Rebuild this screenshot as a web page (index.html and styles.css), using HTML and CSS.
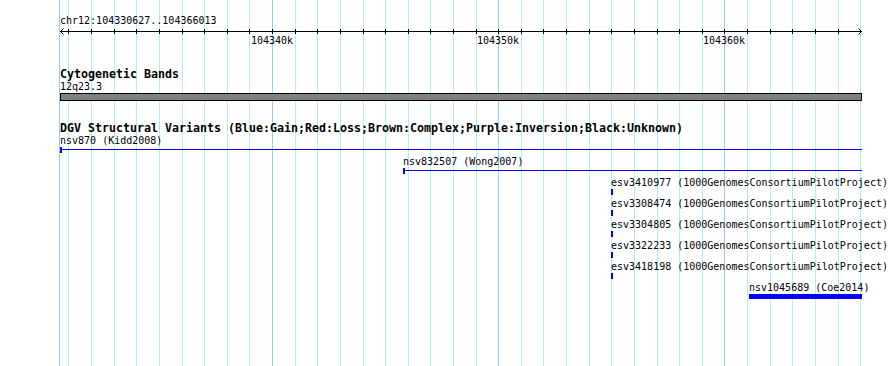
FILE: index.html
```html
<!DOCTYPE html>
<html lang="en">
<head>
    <meta charset="UTF-8">
    <meta name="viewport" content="width=device-width, initial-scale=1.0">
    <title>chr12:104330627..104366013</title>
    <link rel="stylesheet" href="styles.css">
</head>
<body>
    <div class="panel">
        <div class="grid" id="grid"></div>

        <div class="ruler">
            <div class="ruler-label">chr12:104330627..104366013</div>
            <div class="axis" id="axis">
                <svg class="arrow arrow-left" width="4" height="7" viewBox="0 0 4 7">
                    <polyline points="3.5,0.5 0.5,3.5 3.5,6.5" />
                </svg>
                <svg class="arrow arrow-right" width="4" height="7" viewBox="0 0 4 7">
                    <polyline points="0.5,0.5 3.5,3.5 0.5,6.5" />
                </svg>
            </div>
            <div class="axis-labels" id="axisLabels"></div>
        </div>

        <div class="track track-cyto">
            <div class="track-title">Cytogenetic Bands</div>
            <div class="band-label">12q23.3</div>
            <div class="band"></div>
        </div>

        <div class="track track-dgv">
            <div class="track-title">DGV Structural Variants (Blue:Gain;Red:Loss;Brown:Complex;Purple:Inversion;Black:Unknown)</div>

            <div class="feature" style="margin-left: 60px; width: 802px;">
                <div class="feature-label">nsv870 (Kidd2008)</div>
                <div class="glyph glyph-line"></div>
            </div>
            <div class="feature" style="margin-left: 403px; width: 459px;">
                <div class="feature-label">nsv832507 (Wong2007)</div>
                <div class="glyph glyph-line"></div>
            </div>
            <div class="feature" style="margin-left: 611px; width: 2px;">
                <div class="feature-label">esv3410977 (1000GenomesConsortiumPilotProject)</div>
                <div class="glyph glyph-box"></div>
            </div>
            <div class="feature" style="margin-left: 611px; width: 2px;">
                <div class="feature-label">esv3308474 (1000GenomesConsortiumPilotProject)</div>
                <div class="glyph glyph-box"></div>
            </div>
            <div class="feature" style="margin-left: 611px; width: 2px;">
                <div class="feature-label">esv3304805 (1000GenomesConsortiumPilotProject)</div>
                <div class="glyph glyph-box"></div>
            </div>
            <div class="feature" style="margin-left: 611px; width: 2px;">
                <div class="feature-label">esv3322233 (1000GenomesConsortiumPilotProject)</div>
                <div class="glyph glyph-box"></div>
            </div>
            <div class="feature" style="margin-left: 611px; width: 2px;">
                <div class="feature-label">esv3418198 (1000GenomesConsortiumPilotProject)</div>
                <div class="glyph glyph-box"></div>
            </div>
            <div class="feature" style="margin-left: 749px; width: 113px;">
                <div class="feature-label">nsv1045689 (Coe2014)</div>
                <div class="glyph glyph-box glyph-thick"></div>
            </div>
        </div>
    </div>

    <script>
        // region shown and its pixel span
        const START = 104330627;
        const END = 104366013;
        const X0 = 60;
        const X1 = 860.5;
        const scale = (X1 - X0) / (END - START);

        function toX(bp) {
            return Math.round(X0 + (bp - START) * scale);
        }

        const grid = document.getElementById('grid');
        const axis = document.getElementById('axis');
        const axisLabels = document.getElementById('axisLabels');

        function addLine(x, major) {
            const line = document.createElement('div');
            line.className = major ? 'grid-line major' : 'grid-line';
            line.style.left = x + 'px';
            grid.appendChild(line);
        }

        // left edge of the panel
        addLine(59, true);

        for (let k = Math.ceil(START / 1000); k * 1000 <= END; k++) {
            const x = toX(k * 1000);
            const major = k % 10 === 0;
            addLine(x, major);

            if (k * 1000 + 1000 > END) continue; // last one sits under the arrow

            const tick = document.createElement('div');
            tick.className = 'tick';
            tick.style.left = (x - X0) + 'px';
            axis.appendChild(tick);

            if (major) {
                const label = document.createElement('div');
                label.className = 'tick-label';
                label.style.left = (x - 21) + 'px';
                label.textContent = k + 'k';
                axisLabels.appendChild(label);
            }
        }
    </script>
</body>
</html>
```

FILE: styles.css
```css
body {
    margin: 0;
    background-color: #fff;
    color: #000;
    font-family: "DejaVu Sans Mono", monospace;
    font-size: 10px;
}

.panel {
    position: relative;
    width: 890px;
    height: 366px;
    overflow: hidden;
}

.grid {
    position: absolute;
    top: 0;
    left: 0;
    right: 0;
    bottom: 0;
    z-index: 0;
}

.grid-line {
    position: absolute;
    top: 0;
    bottom: 0;
    width: 1px;
    background-color: #afeeee;
}

.grid-line.major {
    background-color: #8cd0f0;
}

.ruler,
.track {
    position: relative;
    z-index: 1;
}

.ruler {
    padding-top: 16px;
}

.ruler-label {
    margin-left: 60px;
    line-height: 10px;
    height: 10px;
    white-space: nowrap;
}

.axis {
    position: relative;
    margin-top: 5px;
    margin-left: 60px;
    width: 802px;
    height: 1px;
    background-color: #000;
}

.tick {
    position: absolute;
    top: -2px;
    width: 1px;
    height: 5px;
    background-color: #000;
}

.arrow {
    position: absolute;
    top: -3px;
    display: block;
}

.arrow polyline {
    fill: none;
    stroke: #000;
    stroke-width: 1;
}

.arrow-left {
    left: 0;
}

.arrow-right {
    left: 798px;
}

.axis-labels {
    position: relative;
    margin-top: 4px;
    height: 10px;
}

.tick-label {
    position: absolute;
    top: 0;
    width: 42px;
    text-align: center;
    line-height: 10px;
    white-space: nowrap;
}

.track-cyto {
    margin-top: 22px;
}

.track-dgv {
    margin-top: 21px;
}

.track-title {
    margin-left: 60px;
    margin-bottom: 2px;
    height: 12px;
    font-weight: bold;
    font-size: 11.63px;
    line-height: 12px;
    white-space: nowrap;
}

.band-label {
    margin-left: 60px;
    line-height: 10px;
    height: 10px;
}

.band {
    margin: 1px 0 0 60px;
    width: 802px;
    height: 8px;
    box-sizing: border-box;
    border: 1px solid #000;
    background-color: #808080;
}

.feature {
    position: relative;
    height: 21px;
}

.feature-label {
    line-height: 10px;
    white-space: nowrap;
}

.glyph {
    position: absolute;
    top: 11px;
    left: 0;
    right: 0;
    height: 6px;
}

.glyph-line::before {
    content: "";
    position: absolute;
    left: 0;
    right: 0;
    top: 2px;
    height: 1px;
    background-color: #00f;
}

.glyph-line::after {
    content: "";
    position: absolute;
    left: 0;
    top: 0;
    width: 2px;
    height: 6px;
    background-color: #00f;
}

.glyph-box {
    background-color: #00f;
}

.glyph-thick {
    height: 5px;
}
```
